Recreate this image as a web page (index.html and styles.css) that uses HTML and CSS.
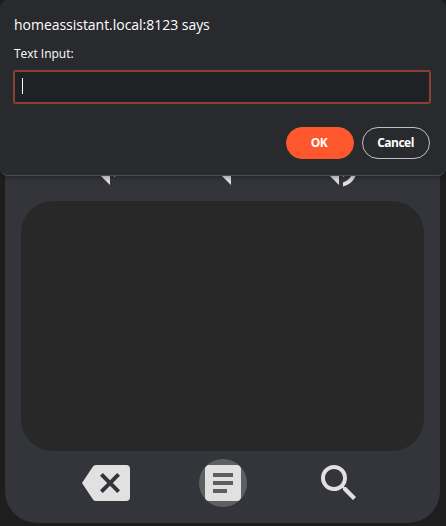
FILE: index.html
```html
<!DOCTYPE html>
<html lang="en">
<head>
<meta charset="utf-8">
<title>Remote</title>
<link rel="stylesheet" href="styles.css">
</head>
<body>
<main class="remote">
  <div class="row">
    <svg class="icon" viewBox="0 0 24 24"><path d="M5,9V15H9L14,20V4L9,9M18.5,12C18.5,10.23 17.5,8.71 16,7.97V16C17.5,15.29 18.5,13.76 18.5,12Z"/></svg>
    <svg class="icon" viewBox="0 0 24 24"><path d="M7,9V15H11L16,20V4L11,9H7Z"/></svg>
    <svg class="icon" viewBox="0 0 24 24"><path d="M14,3.23V5.29C16.89,6.15 19,8.83 19,12C19,15.17 16.89,17.84 14,18.7V20.77C18,19.86 21,16.28 21,12C21,7.72 18,4.14 14,3.23M16.5,12C16.5,10.23 15.5,8.71 14,7.97V16C15.5,15.29 16.5,13.76 16.5,12M3,9V15H7L12,20V4L7,9H3Z"/></svg>
  </div>
  <div class="touchpad"></div>
  <div class="row">
    <svg class="icon" viewBox="0 0 24 24"><path d="M22,3H7C6.31,3 5.77,3.35 5.41,3.88L0,12L5.41,20.11C5.77,20.64 6.31,21 7,21H22A2,2 0 0,0 24,19V5A2,2 0 0,0 22,3M19,15.59L17.59,17L14,13.41L10.41,17L9,15.59L12.59,12L9,8.41L10.41,7L14,10.59L17.59,7L19,8.41L15.41,12"/></svg>
    <svg class="icon pressed" viewBox="0 0 24 24"><path d="M14,17H7V15H14M17,13H7V11H17M17,9H7V7H17M19,3H5C3.89,3 3,3.89 3,5V19A2,2 0 0,0 5,21H19A2,2 0 0,0 21,19V5C21,3.89 20.1,3 19,3Z"/></svg>
    <svg class="icon" viewBox="0 0 24 24"><path d="M9.5,3A6.5,6.5 0 0,1 16,9.5C16,11.11 15.41,12.59 14.44,13.73L14.71,14H15.5L20.5,19L19,20.5L14,15.5V14.71L13.73,14.44C12.59,15.41 11.11,16 9.5,16A6.5,6.5 0 0,1 3,9.5A6.5,6.5 0 0,1 9.5,3M9.5,5C7,5 5,7 5,9.5C5,12 7,14 9.5,14C12,14 14,12 14,9.5C14,7 12,5 9.5,5Z"/></svg>
  </div>
</main>
<section class="dialog" role="dialog">
  <h1 class="title">homeassistant.local:8123 says</h1>
  <p class="label">Text Input:</p>
  <div class="field"><span class="caret"></span></div>
  <div class="actions">
    <button class="button primary">OK</button>
    <button class="button">Cancel</button>
  </div>
</section>
</body>
</html>
```
FILE: styles.css
```css
* {
  box-sizing: border-box;
}

body {
  margin: 0;
  height: 526px;
  overflow: hidden;
  background: #1e1e1e;
  font-family: "Open Sans", "Noto Sans", sans-serif;
}

.remote {
  width: 435px;
  height: 523px;
  margin-left: 5px;
  padding: 145px 16px 16px;
  border-radius: 0 0 32px 32px;
  background: #34353a;
}

.row {
  display: flex;
  justify-content: center;
  gap: 69px;
  height: 48px;
}

.icon {
  flex: none;
  width: 48px;
  height: 48px;
  fill: #e1e1e1;
}

.row .icon:last-child {
  margin-left: -1px;
}

.pressed {
  border-radius: 50%;
  background: #5e5f63;
}

.touchpad {
  height: 250px;
  margin: 8px 0;
  border-radius: 32px;
  background: #282828;
}

.dialog {
  position: absolute;
  top: 0;
  left: 0;
  width: 446px;
  height: 176px;
  padding: 14px 16px 0 14px;
  border-bottom: 1px solid #4b4c4f;
  border-radius: 8px;
  background: #292a2d;
  color: #fff;
  box-shadow: 0 2px 5px rgba(0, 0, 0, 0.3);
}

.title {
  margin: 0;
  font-size: 14px;
  font-weight: 400;
  line-height: 22px;
  letter-spacing: -0.03px;
}

.label {
  margin: 9px 0 8px;
  font-size: 12px;
  line-height: 17px;
  letter-spacing: -0.03px;
}

.field {
  height: 34px;
  margin: 0 -1px;
  padding: 6px 7px;
  border: 2px solid #8b3f31;
  border-radius: 3px;
  background: #202124;
}

.caret {
  display: block;
  width: 1px;
  height: 16px;
  background: #fff;
}

.actions {
  display: flex;
  justify-content: flex-end;
  gap: 8px;
  margin-top: 23px;
}

.button {
  width: 68px;
  height: 32px;
  padding: 0 1px 1px 0;
  border: 1px solid #bdc1c9;
  border-radius: 16px;
  background: transparent;
  color: #fff;
  font: 700 12px "Open Sans", sans-serif;
  letter-spacing: -0.5px;
}

.primary {
  padding-right: 2px;
  border-color: #ff572d;
  background: #ff572d;
}
```
